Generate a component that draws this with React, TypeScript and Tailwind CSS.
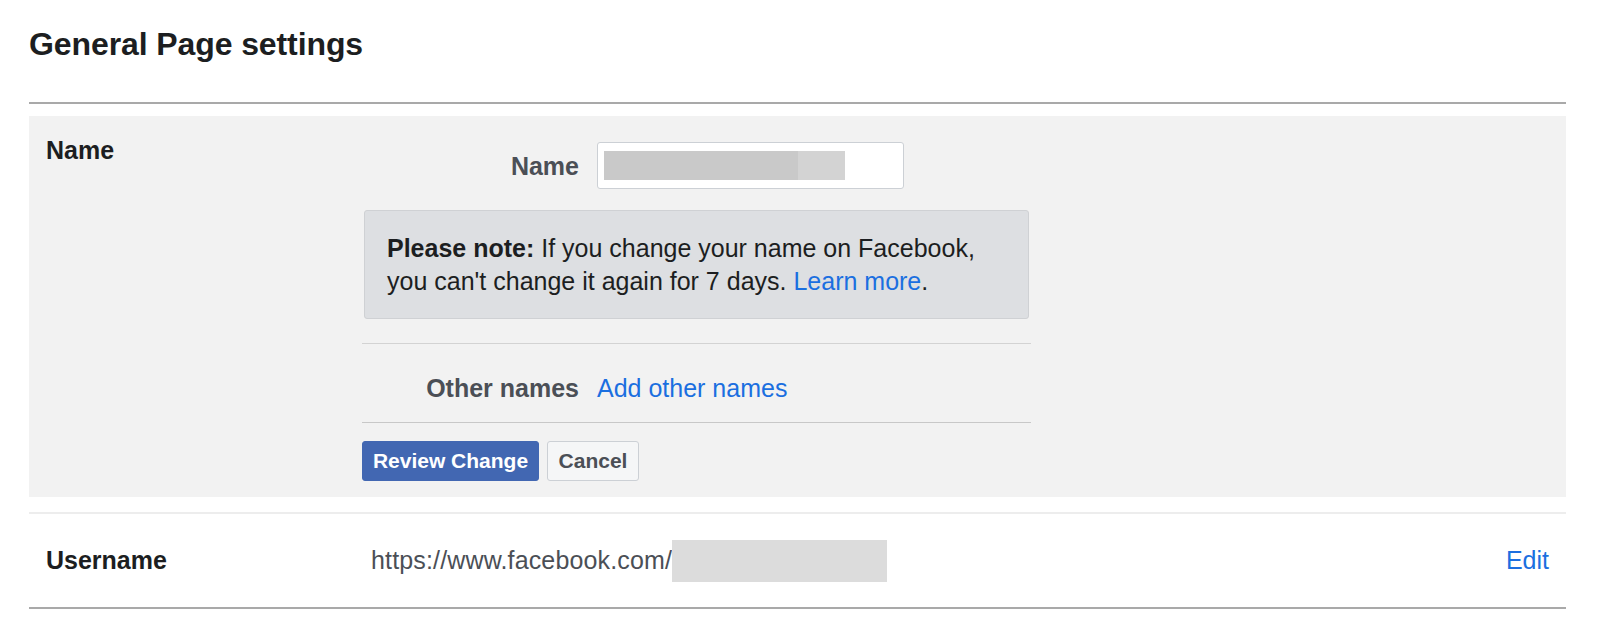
const font = { fontFamily: '"Liberation Sans", Arial, sans-serif' };

function FieldRow({ label, children }: { label: string; children: React.ReactNode }) {
  return (
    <div className="flex items-center">
      <div className="w-[235px] shrink-0 pr-[18px] text-right text-[25px] font-bold leading-[30px] text-[#4b4f56]">{label}</div>
      {children}
    </div>
  );
}

export default function App() {
  return (
    <div className="min-h-[640px] bg-white pl-[29px] pr-[34px] pt-[24px] text-[#1c1e21]" style={font}>
      <h1 className="text-[32px] font-bold leading-[40px] tracking-[-0.1px]">General Page settings</h1>
      <div className="mt-[38px] h-[2px] bg-[#a9a9a9]" />

      {/* expanded Name section */}
      <div className="mt-[12px] flex bg-[#f2f2f2] pb-[16px]">
        <div className="w-[333px] shrink-0 pl-[17px] pt-[19px] text-[25px] font-bold leading-[30px]">Name</div>
        <div className="w-[669px] pt-[26px]">
          <FieldRow label="Name">
            <div className="flex h-[47px] w-[307px] items-center rounded-[3px] border border-[#ccd0d5] bg-white px-[6px]">
              <div className="flex h-[29px]">
                <div className="w-[194px] bg-[#c9c9c9]" />
                <div className="w-[47px] bg-[#d3d3d3]" />
              </div>
            </div>
          </FieldRow>

          <div className="mx-[2px] mt-[21px] rounded-[3px] border border-[#cfd1d4] bg-[#dddfe2] px-[22px] pb-[20px] pt-[21px] text-[25px] leading-[33px] text-[#1c1e21]">
            <span className="font-bold">Please note:</span> If you change your name on Facebook,
            <br />
            you can't change it again for 7 days. <span className="text-[#1b6fe0]">Learn more</span>.
          </div>

          <div className="mt-[24px] h-px bg-[#d3d3d3]" />
          <div className="pb-[19px] pt-[29px]">
            <FieldRow label="Other names">
              <span className="text-[25px] leading-[30px] text-[#1b6fe0]">Add other names</span>
            </FieldRow>
          </div>
          <div className="h-px bg-[#c8c8c8]" />

          <div className="mt-[18px] flex gap-[8px]">
            <button className="h-[40px] w-[177px] rounded-[3px] border border-[#4267b2] bg-[#4267b2] text-[21px] font-bold text-white">
              Review Change
            </button>
            <button className="h-[40px] w-[92px] rounded-[3px] border border-[#ccd0d5] bg-[#f5f6f7] text-[21px] font-bold text-[#4b4f56]">
              Cancel
            </button>
          </div>
        </div>
      </div>

      <div className="mt-[15px] h-[2px] bg-[#ededed]" />

      {/* Username row */}
      <div className="flex h-[93px] items-center pl-[17px] pr-[17px]">
        <div className="w-[325px] shrink-0 text-[25px] font-bold">Username</div>
        <div className="flex flex-1 items-center text-[25px] text-[#4b4f56]">
          <span className="tracking-[0.15px]">https://www.facebook.com/</span>
          <div className="h-[42px] w-[215px] bg-[#dcdcdc]" />
        </div>
        <span className="text-[25px] text-[#1b6fe0]">Edit</span>
      </div>
      <div className="h-[2px] bg-[#a9a9a9]" />
    </div>
  );
}
